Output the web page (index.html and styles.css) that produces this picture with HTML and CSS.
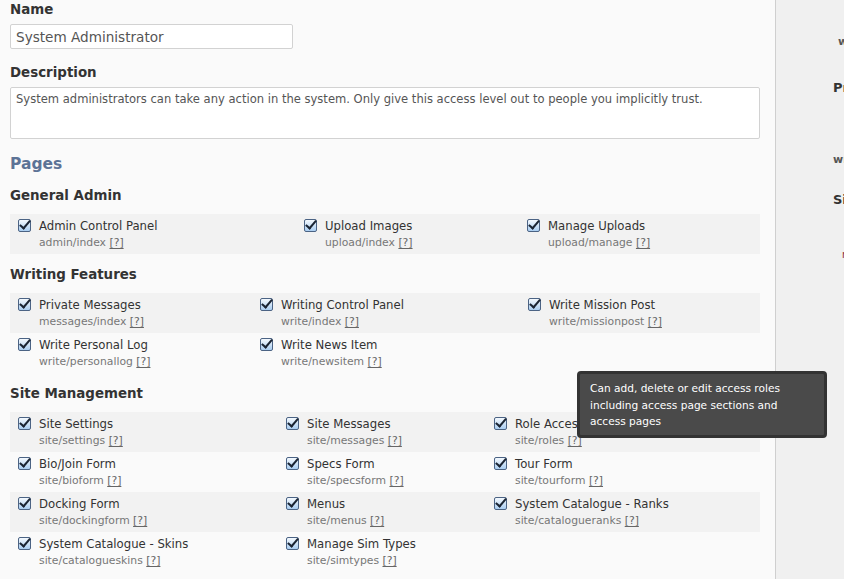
FILE: index.html
```html
<!DOCTYPE html>
<html>
<head>
<meta charset="utf-8">
<link rel="stylesheet" href="styles.css">
</head>
<body>
<div class="page">
  <main class="content">
    <div class="label">Name</div>
    <input class="text-input" type="text" value="System Administrator">
    <div class="label label-gap">Description</div>
    <div class="textarea">System administrators can take any action in the system. Only give this access level out to people you implicitly trust.</div>

    <h2 class="pages">Pages</h2>

    <h3 class="section">General Admin</h3>
    <div class="grid grid-general">
      <div class="item"><span class="cb"></span><div><div class="name">Admin Control Panel</div><div class="url">admin/index <span class="help">[?]</span></div></div></div>
      <div class="item"><span class="cb"></span><div><div class="name">Upload Images</div><div class="url">upload/index <span class="help">[?]</span></div></div></div>
      <div class="item"><span class="cb"></span><div><div class="name">Manage Uploads</div><div class="url">upload/manage <span class="help">[?]</span></div></div></div>
    </div>

    <h3 class="section">Writing Features</h3>
    <div class="grid grid-writing">
      <div class="item"><span class="cb"></span><div><div class="name">Private Messages</div><div class="url">messages/index <span class="help">[?]</span></div></div></div>
      <div class="item"><span class="cb"></span><div><div class="name">Writing Control Panel</div><div class="url">write/index <span class="help">[?]</span></div></div></div>
      <div class="item"><span class="cb"></span><div><div class="name">Write Mission Post</div><div class="url">write/missionpost <span class="help">[?]</span></div></div></div>
      <div class="item alt"><span class="cb"></span><div><div class="name">Write Personal Log</div><div class="url">write/personallog <span class="help">[?]</span></div></div></div>
      <div class="item alt"><span class="cb"></span><div><div class="name">Write News Item</div><div class="url">write/newsitem <span class="help">[?]</span></div></div></div>
      <div class="item alt"></div>
    </div>

    <h3 class="section">Site Management</h3>
    <div class="grid grid-site">
      <div class="item"><span class="cb"></span><div><div class="name">Site Settings</div><div class="url">site/settings <span class="help">[?]</span></div></div></div>
      <div class="item"><span class="cb"></span><div><div class="name">Site Messages</div><div class="url">site/messages <span class="help">[?]</span></div></div></div>
      <div class="item"><span class="cb"></span><div><div class="name">Role Access</div><div class="url">site/roles <span class="help">[?]</span></div></div></div>
      <div class="item alt"><span class="cb"></span><div><div class="name">Bio/Join Form</div><div class="url">site/bioform <span class="help">[?]</span></div></div></div>
      <div class="item alt"><span class="cb"></span><div><div class="name">Specs Form</div><div class="url">site/specsform <span class="help">[?]</span></div></div></div>
      <div class="item alt"><span class="cb"></span><div><div class="name">Tour Form</div><div class="url">site/tourform <span class="help">[?]</span></div></div></div>
      <div class="item"><span class="cb"></span><div><div class="name">Docking Form</div><div class="url">site/dockingform <span class="help">[?]</span></div></div></div>
      <div class="item"><span class="cb"></span><div><div class="name">Menus</div><div class="url">site/menus <span class="help">[?]</span></div></div></div>
      <div class="item"><span class="cb"></span><div><div class="name">System Catalogue - Ranks</div><div class="url">site/catalogueranks <span class="help">[?]</span></div></div></div>
      <div class="item alt"><span class="cb"></span><div><div class="name">System Catalogue - Skins</div><div class="url">site/catalogueskins <span class="help">[?]</span></div></div></div>
      <div class="item alt"><span class="cb"></span><div><div class="name">Manage Sim Types</div><div class="url">site/simtypes <span class="help">[?]</span></div></div></div>
      <div class="item alt"></div>
    </div>

    <div class="tooltip">Can add, delete or edit access roles including access page sections and access pages</div>
  </main>
  <aside class="sidebar">
    <div class="side-link side-first">welcome</div>
    <div class="side-head">Profile</div>
    <div class="side-link side-w">write</div>
    <div class="side-head side-si">Site</div>
    <div class="side-red">menu</div>
  </aside>
</div>
</body>
</html>
```

FILE: styles.css
```css
html, body {
  margin: 0;
  padding: 0;
}
body {
  background: #fafafa;
  font-family: "DejaVu Sans", "Liberation Sans", sans-serif;
  color: #333;
  width: 844px;
  height: 579px;
  overflow: hidden;
}
.page {
  display: flex;
  height: 579px;
}
.content {
  position: relative;
  width: 775px;
  box-sizing: border-box;
  padding: 1px 15px 0 10px;
  flex: none;
}
.label {
  font-weight: bold;
  font-size: 13.4px;
  line-height: 18px;
  color: #333;
}
.label-gap {
  margin-top: 15px;
}
.text-input {
  display: block;
  margin: 5px 0 0;
  width: 283px;
  height: 25px;
  box-sizing: border-box;
  border: 1px solid #d2d2d2;
  border-radius: 2px;
  background: #fff;
  font-family: "DejaVu Sans", sans-serif;
  font-size: 13.6px;
  color: #555;
  padding: 0 5px;
}
.textarea {
  margin-top: 5px;
  height: 52px;
  box-sizing: border-box;
  border: 1px solid #d2d2d2;
  border-radius: 2px;
  background: #fff;
  font-size: 11.55px;
  line-height: 14px;
  color: #555;
  padding: 4px 5px;
}
.pages {
  margin: 15px 0 0;
  font-size: 15.5px;
  line-height: 20px;
  color: #5c7396;
  font-weight: bold;
}
.section {
  margin: 13px 0 9px;
  font-size: 13.4px;
  line-height: 18px;
  font-weight: bold;
  color: #333;
}
.grid + .section {
  margin-top: 12px;
}
.grid {
  display: grid;
  grid-auto-rows: 40px;
}
.grid-general { grid-template-columns: 286px 223px 241px; }
.grid-writing { grid-template-columns: 242px 268px 240px; }
.grid-site { grid-template-columns: 268px 208px 274px; }
.item {
  background: #f2f2f2;
  display: flex;
  align-items: flex-start;
  padding: 4px 0 0 8px;
  box-sizing: border-box;
  gap: 8px;
}
.item.alt {
  background: transparent;
}
.cb {
  flex: none;
  width: 13px;
  height: 13px;
  margin-top: 1px;
  box-sizing: border-box;
  border: 1px solid #4b6384;
  border-radius: 2px;
  background: linear-gradient(#f4f9fe, #a9cdf1);
  position: relative;
}
.cb::after {
  content: "";
  position: absolute;
  left: 3px;
  top: -2px;
  width: 4px;
  height: 9px;
  border: solid #1a2433;
  border-width: 0 2px 2px 0;
  transform: rotate(40deg);
}
.name {
  font-size: 11.7px;
  line-height: 16px;
  color: #333;
  white-space: nowrap;
}
.url {
  font-size: 10.8px;
  line-height: 18px;
  color: #777;
  white-space: nowrap;
}
.help {
  text-decoration: underline;
  text-underline-offset: 2px;
  color: #666;
}
.tooltip {
  position: absolute;
  left: 577px;
  top: 371px;
  width: 250px;
  height: 67px;
  box-sizing: border-box;
  background: #4a4a4a;
  border: 3px solid #333;
  border-radius: 4px;
  color: #fff;
  font-size: 10.6px;
  line-height: 16.5px;
  padding: 6px 10px 0 10px;
}
.sidebar {
  flex: 1;
  border-left: 1px solid #cfcfcf;
  background: #f0f0f0;
  overflow: hidden;
  white-space: nowrap;
}
.side-link {
  font-size: 11px;
  line-height: 14px;
  color: #555;
  font-weight: bold;
}
.side-first {
  margin: 35px 0 0 62px;
}
.side-head {
  font-size: 13px;
  line-height: 16px;
  font-weight: bold;
  color: #333;
  margin: 31px 0 0 57px;
}
.side-w {
  margin: 57px 0 0 57px;
}
.side-si {
  margin-top: 25px;
}
.side-red {
  font-size: 10px;
  line-height: 12px;
  color: #8b2a2a;
  margin: 41px 0 0 66px;
}
```
